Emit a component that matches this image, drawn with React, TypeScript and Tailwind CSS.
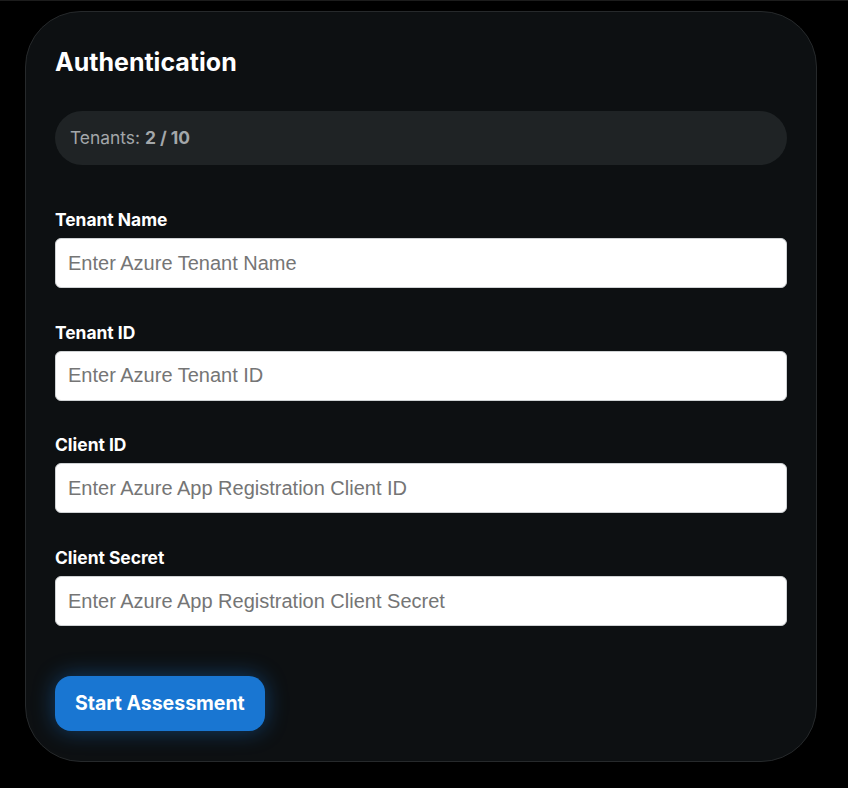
export default function App() {
  const fields = [
    { label: 'Tenant Name', placeholder: 'Enter Azure Tenant Name' },
    { label: 'Tenant ID', placeholder: 'Enter Azure Tenant ID' },
    { label: 'Client ID', placeholder: 'Enter Azure App Registration Client ID' },
    { label: 'Client Secret', placeholder: 'Enter Azure App Registration Client Secret' },
  ]

  return (
    <div className="min-h-[788px] bg-black border-t border-[#1c1c1c] pt-[10px] font-['Inter',sans-serif]">
      <div className="ml-[25px] w-[792px] rounded-[56px] border border-[#26292b] bg-[#0d1012] px-[29px] pt-[34px] pb-[30px]">
        <h2 className="text-[25px] font-bold text-white leading-8">Authentication</h2>

        <div className="mt-[33px] rounded-full bg-[#1f2325] px-[15px] py-[15px] text-[17.4px] leading-6 text-[#a3a7aa]">
          Tenants: <span className="font-bold">2 / 10</span>
        </div>

        <form className="mt-[43px] flex flex-col gap-[32.7px]" onSubmit={(e) => e.preventDefault()}>
          {fields.map((f) => (
            <div key={f.label} className="flex flex-col">
              <label className="text-[17.4px] font-bold leading-6 text-white mb-[6px]">{f.label}</label>
              <input
                type={f.label === 'Client Secret' ? 'password' : 'text'}
                placeholder={f.placeholder}
                className="h-[50px] w-full rounded-[6px] border border-[#cfd2d4] bg-white px-[12px] font-['Liberation_Sans',Arial,sans-serif] text-[20px] text-[#111] placeholder-[#757575] outline-none"
              />
            </div>
          ))}

          <div className="mt-[17px]">
            <button
              type="submit"
              className="h-[55px] rounded-[16px] bg-[#1976d2] px-[20px] text-[19.5px] font-bold text-white shadow-[0_0_22px_rgba(25,118,210,0.45)]"
            >
              Start Assessment
            </button>
          </div>
        </form>
      </div>
    </div>
  )
}
